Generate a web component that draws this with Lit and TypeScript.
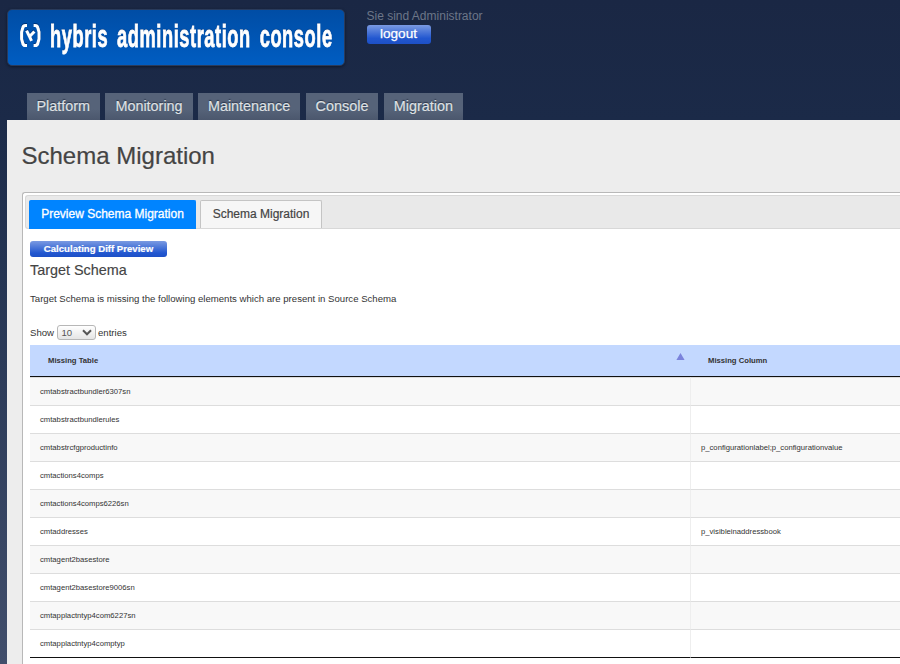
import { LitElement, html, css } from "lit";
import { customElement } from "lit/decorators.js";
import { classMap } from "lit/directives/class-map.js";

const NAV = ["Platform", "Monitoring", "Maintenance", "Console", "Migration"];

const ROWS: [string, string][] = [
  ["cmtabstractbundler6307sn", ""],
  ["cmtabstractbundlerules", ""],
  ["cmtabstrcfgproductinfo", "p_configurationlabel;p_configurationvalue"],
  ["cmtactions4comps", ""],
  ["cmtactions4comps6226sn", ""],
  ["cmtaddresses", "p_visibleinaddressbook"],
  ["cmtagent2basestore", ""],
  ["cmtagent2basestore9006sn", ""],
  ["cmtapplactntyp4com6227sn", ""],
  ["cmtapplactntyp4comptyp", ""],
];

@customElement("hac-logo")
class HacLogo extends LitElement {
  static styles = css`
    :host {
      display: block;
      box-sizing: border-box;
      width: 338px;
      height: 57px;
      border: 1px solid #293b5c;
      border-radius: 5px;
      background: linear-gradient(#004da5, #005dc2);
      box-shadow: 0 1px 3px rgba(0, 0, 0, 0.45);
    }
    .line { display: flex; height: 55px; }
    svg { display: block; flex: none; margin-left: 10px; }
    .words {
      display: flex;
      font: bold 32px/53px "Liberation Sans", Arial, sans-serif;
      letter-spacing: 1px;
      word-spacing: 5.8px;
      color: #fff;
      white-space: nowrap;
      -webkit-text-stroke: 0.9px #fff;
      text-shadow: 0 -1px 1px rgba(0, 35, 90, 0.65);
      transform-origin: 0 50%;
      transform: scaleX(0.57);
      margin-left: 7.5px;
      width: 200px;
    }
    .mark { fill: none; stroke: #fff; stroke-width: 3; }
    .shade { filter: drop-shadow(0 -1px 0 rgba(0, 35, 90, 0.65)); }
  `;
  render() {
    return html`<div class="line">
      <svg width="24" height="55" viewBox="18 10 24 55">
        <g class="shade">
          <path class="mark" d="M27 25.4H25.5Q23 25.4 22.6 28.5L21.6 32V39L22.6 42.5Q23 45.6 25.5 45.6H27" />
          <path class="mark" d="M33.6 25.4H35Q37.6 25.4 38 28.5L39 32V39L38 42.5Q37.6 45.6 35 45.6H33.6" />
          <path class="mark" d="M26.6 30.6L31.6 40.8" />
          <path class="mark" d="M34.4 31.5L29.8 36.2" stroke-width="2.4" />
        </g>
      </svg>
      <div class="words">hybris administration console</div>
    </div>`;
  }
}

@customElement("app-root")
class AppRoot extends LitElement {
  static styles = css`
    :host {
      display: block;
      box-sizing: border-box;
      height: 664px;
      overflow: hidden;
      padding-left: 7px;
      font-family: "Liberation Sans", Arial, sans-serif;
      color: #333;
      background: linear-gradient(#1a2744 0, #1b2a48 120px, #243452 260px, #414e6b 664px);
    }
    .top { display: flex; height: 93px; box-sizing: border-box; padding-top: 9px; }
    .user { margin-left: 21.5px; }
    .who { font-size: 12px; line-height: 14px; color: #6c7688; white-space: nowrap; }
    .logout {
      width: 64px;
      height: 19px;
      margin-top: 2px;
      border-radius: 3px;
      background: linear-gradient(#7a9ae2, #2257d0 70%, #1d50c6);
      color: #fff;
      font-size: 13.6px;
      line-height: 18px;
      text-align: center;
      -webkit-text-stroke: 0.25px #fff;
    }
    .nav { display: flex; gap: 5.3px; height: 27px; padding-left: 19.5px; }
    .nav a {
      padding: 0 10px;
      font-size: 14.4px;
      line-height: 26px;
      color: #dfe1e4;
      background: linear-gradient(#566379 60%, #4b576d);
      text-shadow: 0 -1px 1px rgba(20, 30, 50, 0.7);
      -webkit-text-stroke: 0.2px currentColor;
    }
    .page { height: 544px; background: #ededed; padding: 22px 0 0 15px; box-sizing: border-box; overflow: hidden; }
    h1 { margin: 0 0 0 -0.5px; font-size: 24px; font-weight: normal; line-height: 28px; color: #444; -webkit-text-stroke: 0.2px currentColor; }
    .panel {
      box-sizing: border-box;
      height: 500px;
      margin-top: 22px;
      padding: 2px 0 0 2px;
      border: 1px solid #b8b8b8;
      border-right: 0;
      border-radius: 3px 0 0 0;
      background: #fff;
    }
    .tabs {
      display: flex;
      gap: 4px;
      box-sizing: border-box;
      height: 34px;
      padding: 4px 0 0 3px;
      border: 1px solid #d8d8d8;
      border-right: 0;
      border-radius: 3px 0 0 3px;
      background: #e9e9e9;
    }
    .tab {
      box-sizing: border-box;
      width: 122px;
      height: 28px;
      border: 1px solid #c4c4c4;
      border-bottom: 0;
      border-radius: 2px 2px 0 0;
      background: #f6f6f6;
      color: #444;
      font-size: 12px;
      line-height: 27px;
      text-align: center;
      white-space: nowrap;
      -webkit-text-stroke: 0.2px currentColor;
    }
    .active { width: 167px; height: 29px; border-color: #0084ff; background: #0084ff; color: #fff; -webkit-text-stroke-width: 0.3px; }
    .body { padding: 12px 0 0 5px; }
    .calc {
      width: 137px;
      height: 16px;
      border-radius: 3px;
      background: linear-gradient(#7a9ae2, #2257d0 75%, #1d50c6);
      color: #fff;
      font-size: 9.6px;
      font-weight: bold;
      line-height: 16px;
      text-align: center;
      -webkit-text-stroke: 0.2px #fff;
    }
    h2 { margin: 4px 0 0; font-size: 14.4px; font-weight: normal; line-height: 18px; color: #444; -webkit-text-stroke: 0.15px currentColor; }
    p { margin: 14px 0 0; font-size: 9.6px; line-height: 12px; }
    .length { display: flex; align-items: center; gap: 2.5px; height: 16px; margin-top: 19px; font-size: 9.6px; }
    .select {
      display: flex;
      align-items: center;
      justify-content: space-between;
      box-sizing: border-box;
      width: 39px;
      height: 15px;
      padding: 0 3px 0 4px;
      border: 1px solid #b7b7b7;
      border-radius: 3px;
      background: linear-gradient(#fff, #e5e5e5);
      color: #555;
    }
    table { width: 900px; margin-top: 5px; border-collapse: separate; border-spacing: 0; table-layout: fixed; font-size: 7.68px; }
    th, td { box-sizing: border-box; padding: 0 10px; text-align: left; }
    th { height: 32px; padding-left: 18px; background: #c3d8ff; border-bottom: 1px solid #111; }
    th:first-child { width: 660px; }
    .head { display: flex; align-items: center; justify-content: space-between; }
    .sort { margin: -8px -5px 0 0; display: block; }
    td { height: 28px; border-top: 1px solid #ddd; }
    td + td { border-left: 1px solid #eee; }
    .odd td { background: #f8f8f8; }
    tbody tr:last-child td { height: 29px; border-bottom: 1px solid #111; }
  `;

  render() {
    return html`
      <div class="top">
        <hac-logo></hac-logo>
        <div class="user">
          <div class="who">Sie sind Administrator</div>
          <div class="logout">logout</div>
        </div>
      </div>
      <nav class="nav">${NAV.map((n) => html`<a>${n}</a>`)}</nav>
      <main class="page">
        <h1>Schema Migration</h1>
        <section class="panel">
          <div class="tabs">
            <div class="tab active">Preview Schema Migration</div>
            <div class="tab">Schema Migration</div>
          </div>
          <div class="body">
            <div class="calc">Calculating Diff Preview</div>
            <h2>Target Schema</h2>
            <p>Target Schema is missing the following elements which are present in Source Schema</p>
            <div class="length">
              <span>Show</span>
              <span class="select">10
                <svg width="10" height="7" viewBox="0 0 10 7"><path d="M1 1.3L5 5.3L9 1.3" fill="none" stroke="#555" stroke-width="2" /></svg>
              </span>
              <span>entries</span>
            </div>
            <table>
              <thead>
                <tr>
                  <th><div class="head">Missing Table
                    <svg class="sort" width="9" height="7" viewBox="0 0 9 7"><path d="M4.5 0L8.6 7H.4Z" fill="#7b83dc" /></svg>
                  </div></th>
                  <th>Missing Column</th>
                </tr>
              </thead>
              <tbody>
                ${ROWS.map(([t, c], i) => html`<tr class=${classMap({ odd: i % 2 === 0 })}><td>${t}</td><td>${c}</td></tr>`)}
              </tbody>
            </table>
          </div>
        </section>
      </main>
    `;
  }
}
